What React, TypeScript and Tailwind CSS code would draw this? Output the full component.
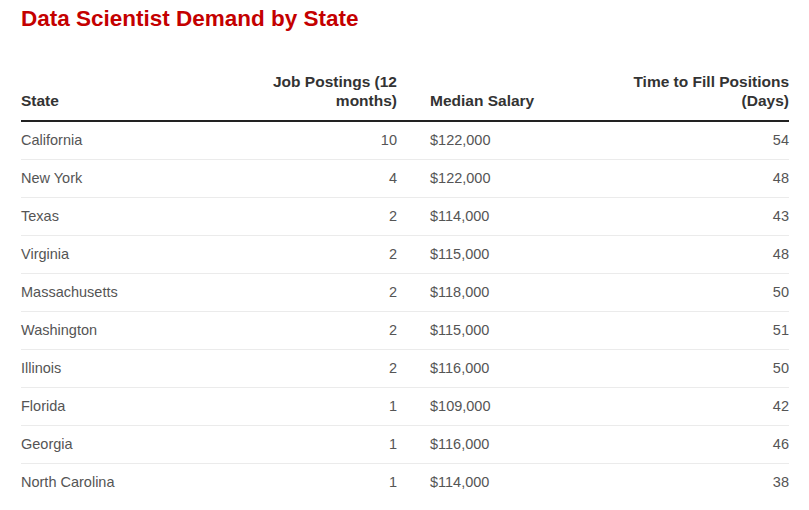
import React from "react";

const rows = [
  ["California", "10", "$122,000", "54"],
  ["New York", "4", "$122,000", "48"],
  ["Texas", "2", "$114,000", "43"],
  ["Virginia", "2", "$115,000", "48"],
  ["Massachusetts", "2", "$118,000", "50"],
  ["Washington", "2", "$115,000", "51"],
  ["Illinois", "2", "$116,000", "50"],
  ["Florida", "1", "$109,000", "42"],
  ["Georgia", "1", "$116,000", "46"],
  ["North Carolina", "1", "$114,000", "38"],
];

const cols = "grid grid-cols-[228px_148px_33px_189px_170px]";

export default function App() {
  return (
    <div
      className="w-[809px] h-[510px] bg-white pl-[21px] pt-[6px]"
      style={{ fontFamily: '"Liberation Sans", Arial, sans-serif' }}
    >
      <h1 className="text-[22.5px] leading-[26px] font-bold text-[#c40000]">
        Data Scientist Demand by State
      </h1>
      <div className="w-[768px] mt-[40px]">
        <div className={`${cols} items-end pb-[10px] border-b-2 border-[#222] text-[15.5px] leading-[19px] font-bold text-[#333]`}>
          <div>State</div>
          <div className="text-right">Job Postings (12 months)</div>
          <div />
          <div>Median Salary</div>
          <div className="text-right">Time to Fill Positions (Days)</div>
        </div>
        {rows.map((r, i) => (
          <div
            key={r[0]}
            className={`${cols} items-center h-[38px] text-[14.5px] text-[#555] ${i < rows.length - 1 ? "border-b border-[#ebebeb]" : ""}`}
          >
            <div>{r[0]}</div>
            <div className="text-right">{r[1]}</div>
            <div />
            <div>{r[2]}</div>
            <div className="text-right">{r[3]}</div>
          </div>
        ))}
      </div>
    </div>
  );
}
